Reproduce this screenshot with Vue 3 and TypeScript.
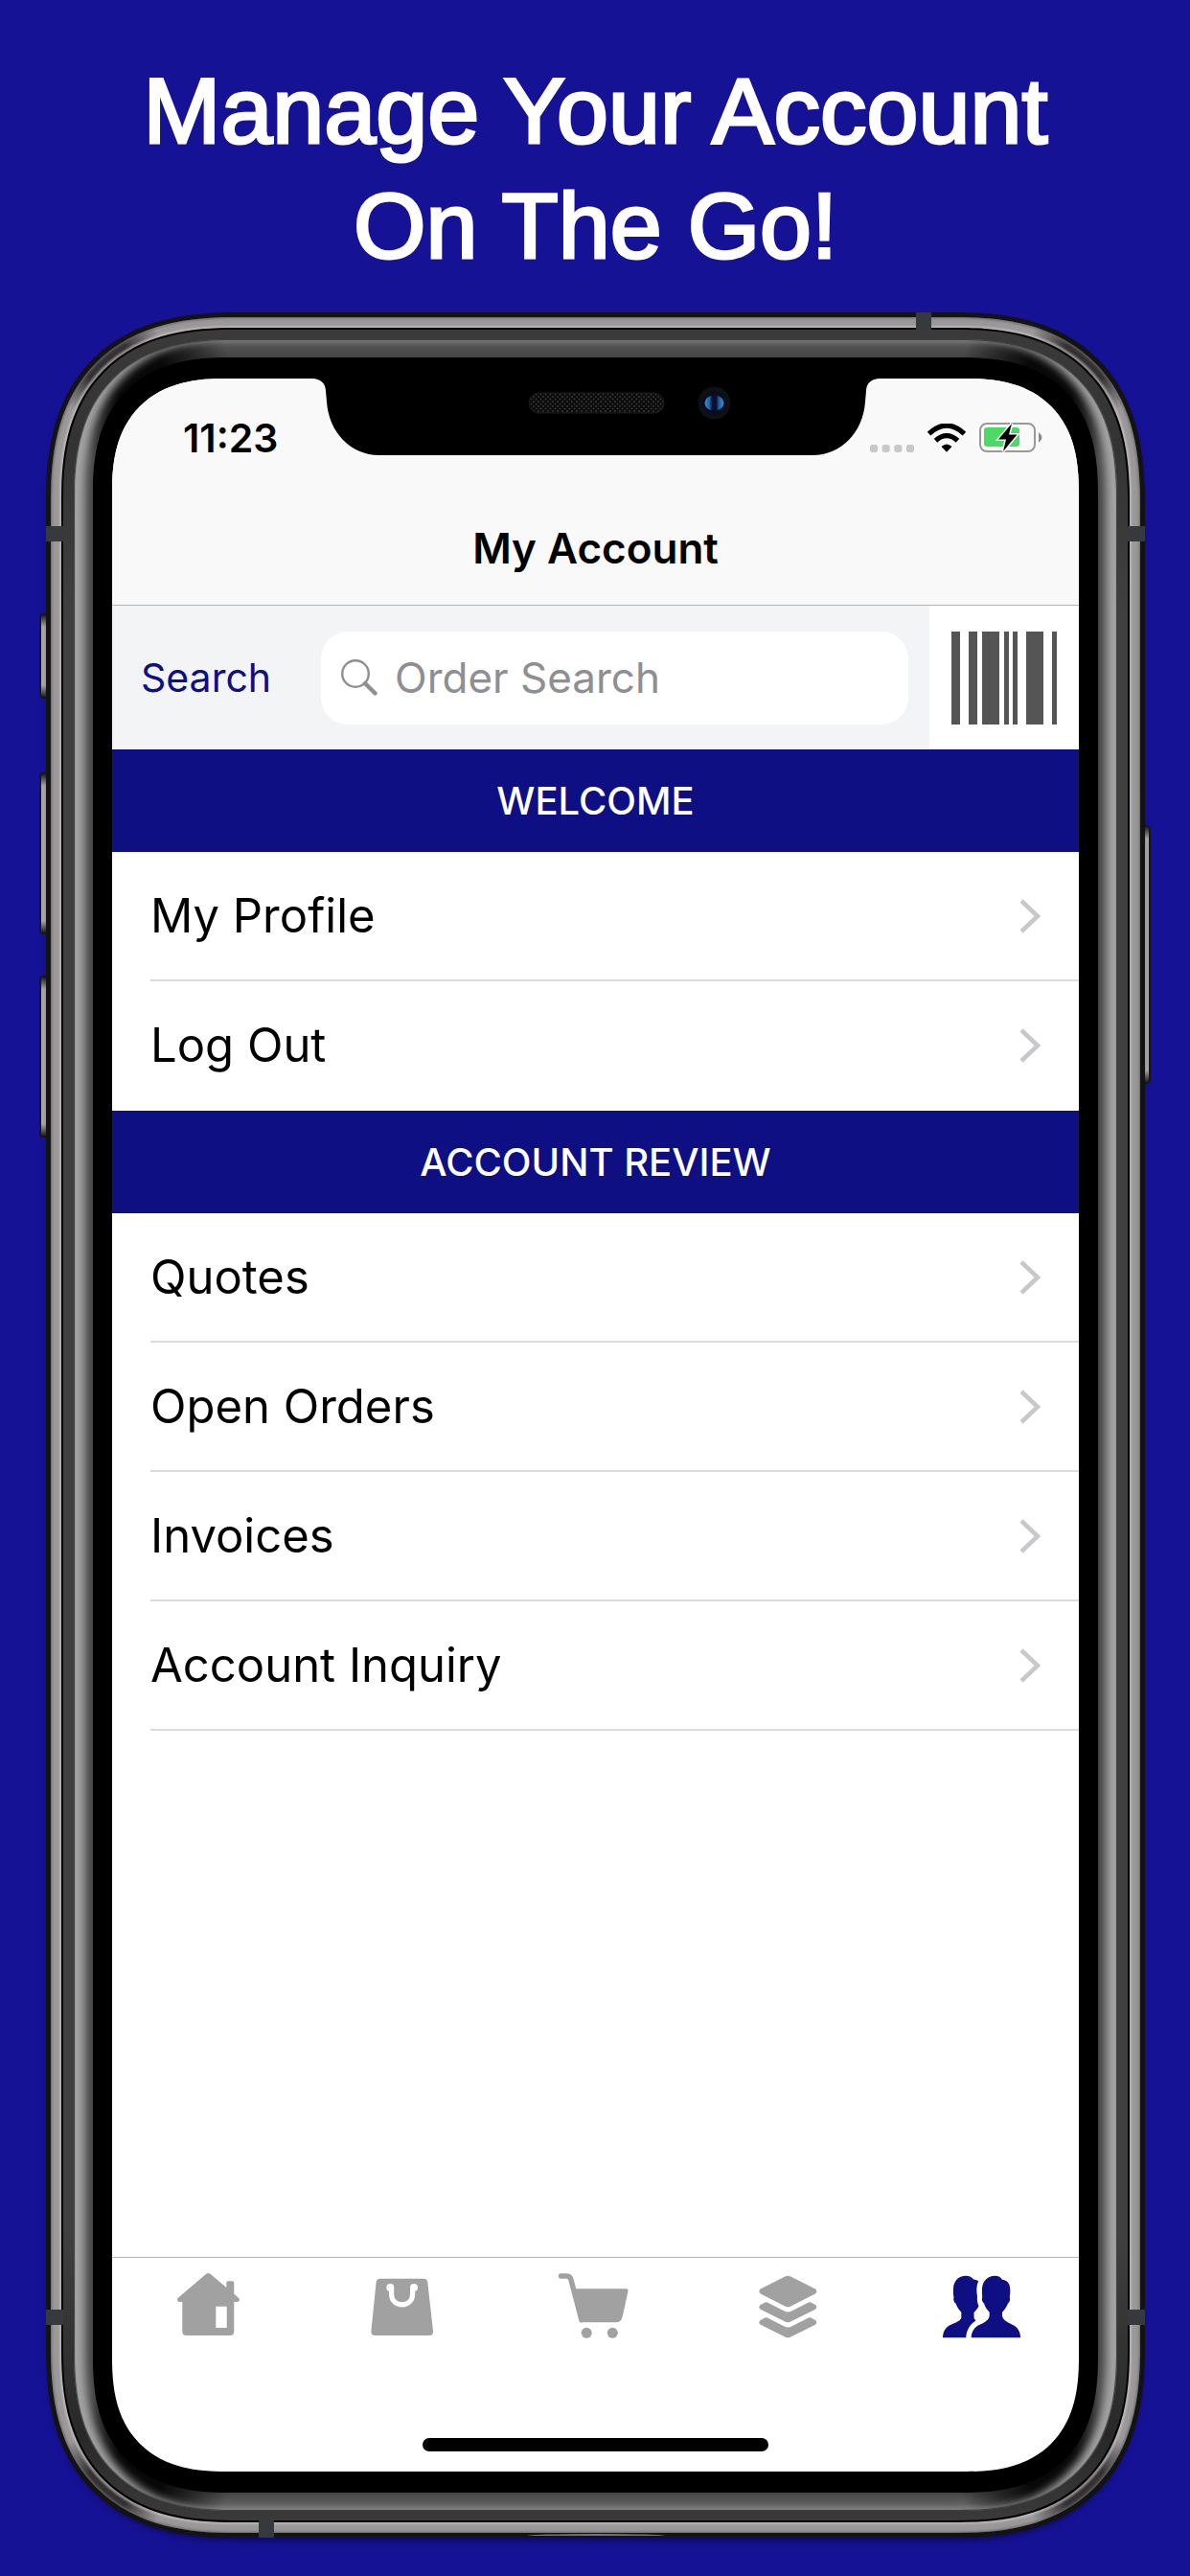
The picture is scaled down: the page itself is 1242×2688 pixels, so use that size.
<script setup lang="ts">
import { ref } from 'vue'

interface Section {
  title: string
  items: string[]
}

interface Bar {
  x: number
  width: number
}

interface Tab {
  id: 'home' | 'shop' | 'cart' | 'catalog' | 'account'
  label: string
}

const sections: Section[] = [
  { title: 'WELCOME', items: ['My Profile', 'Log Out'] },
  { title: 'ACCOUNT REVIEW', items: ['Quotes', 'Open Orders', 'Invoices', 'Account Inquiry'] },
]

const bars: Bar[] = [
  { x: 0, width: 9 },
  { x: 18, width: 9 },
  { x: 32, width: 18 },
  { x: 55, width: 5 },
  { x: 64, width: 5 },
  { x: 78, width: 18 },
  { x: 105, width: 5 },
]

const tabs: Tab[] = [
  { id: 'home', label: 'Home' },
  { id: 'shop', label: 'Shop' },
  { id: 'cart', label: 'Cart' },
  { id: 'catalog', label: 'Catalog' },
  { id: 'account', label: 'Account' },
]

const query = ref('')
const activeTab = ref<Tab['id']>('account')
</script>

<template>
  <main class="page">
    <h1 class="headline">Manage Your Account<br />On The Go!</h1>

    <div class="phone">
      <span class="key key-mute"></span>
      <span class="key key-up"></span>
      <span class="key key-down"></span>
      <span class="key key-power"></span>
      <div class="layer edge">
        <div class="layer rail">
          <div class="layer seam">
            <div class="layer band">
              <div class="layer glass">
                <div class="layer bezel">
                  <div class="layer screen">
                    <svg class="notch" viewBox="0 0 592 82" aria-hidden="true">
                      <defs>
                        <pattern id="mesh" width="5" height="5" patternUnits="userSpaceOnUse">
                          <rect width="5" height="5" fill="#0b0b0b" />
                          <circle cx="1" cy="1" r="1" fill="#363636" />
                          <circle cx="3.5" cy="3.5" r="1" fill="#363636" />
                        </pattern>
                        <linearGradient id="lens">
                          <stop offset="0" stop-color="#3b8fd6" />
                          <stop offset="0.25" stop-color="#235f9e" />
                          <stop offset="0.4" stop-color="#0a1030" />
                          <stop offset="0.6" stop-color="#0a1030" />
                          <stop offset="0.75" stop-color="#235f9e" />
                          <stop offset="1" stop-color="#3b8fd6" />
                        </linearGradient>
                      </defs>
                      <path d="M0 0V2C8 2 14 7 14 15L15 26C17 58 40 82 70 82H522C552 82 575 58 577 26L578 15C578 7 584 2 592 2V0Z" fill="#000" />
                      <rect x="226" y="17" width="141" height="21" rx="10.5" fill="url(#mesh)" stroke="#1c1c1c" />
                      <circle cx="419.500" cy="27.500" r="17" fill="#0e1013" />
                      <circle cx="419.500" cy="27.500" r="12" fill="#080c22" />
                      <ellipse cx="419.500" cy="27.500" rx="10" ry="8" fill="url(#lens)" />
                    </svg>

                    <header class="top">
                      <div class="status">
                        <span class="time">11:23</span>
                        <span class="indicators">
                          <svg width="46" height="8" viewBox="0 0 46 8" fill="#c8c8c8" aria-hidden="true">
                            <rect v-for="n in 4" :key="n" :x="(n - 1) * 12.67" y="0" width="8" height="8" rx="2.5" />
                          </svg>
                          <svg width="40" height="30" viewBox="0 0 40 30" fill="none" stroke="#000" aria-hidden="true">
                            <path d="M1.600 10.600Q20-6.500 38.400 10.600" stroke-width="5.200" />
                            <path d="M8.500 17.800Q20 7.500 31.500 17.800" stroke-width="5.200" />
                            <path d="M14.500 24Q20 19 25.500 24L20 29.800Z" fill="#000" stroke="none" />
                          </svg>
                          <svg width="66" height="31" viewBox="0 0 66 31" aria-hidden="true">
                            <rect x="1" y="1" width="57" height="29" rx="7" fill="none" stroke="#999" stroke-width="2" />
                            <rect x="5" y="5" width="37" height="20" rx="3" fill="#4cd964" />
                            <path d="M62 10Q69 15.500 62 21Z" fill="#8b8b8b" />
                            <path d="M34 1L20 17.500H28L25 30L39.500 12.500H31Z" fill="#000" stroke="#f9f9f9" stroke-width="3" paint-order="stroke" />
                          </svg>
                        </span>
                      </div>
                      <h2 class="title">My Account</h2>
                    </header>

                    <form class="search" role="search" @submit.prevent>
                      <button class="search-button" type="submit">Search</button>
                      <label class="field">
                        <svg width="38" height="38" viewBox="0 0 38 38" fill="none" stroke="#8e8e93" aria-hidden="true">
                          <circle cx="15" cy="15" r="13.800" stroke-width="2.400" />
                          <path d="M25 25L35.500 35.500" stroke-width="4.400" stroke-linecap="round" />
                        </svg>
                        <input v-model="query" type="text" placeholder="Order Search" aria-label="Order Search" />
                      </label>
                      <button class="scan" type="button" aria-label="Scan barcode">
                        <svg width="110" height="97" viewBox="0 0 110 97" fill="#555" aria-hidden="true">
                          <rect v-for="bar in bars" :key="bar.x" :x="bar.x" y="0" :width="bar.width" height="97" />
                        </svg>
                      </button>
                    </form>

                    <section v-for="section in sections" :key="section.title" class="section">
                      <h3 class="section-title">{{ section.title }}</h3>
                      <ul class="list">
                        <li v-for="item in section.items" :key="item">
                          <a class="row" href="#">
                            {{ item }}
                            <svg width="22" height="36" viewBox="0 0 22 36" fill="none" stroke="#c7c7cc" stroke-width="4.500" aria-hidden="true">
                              <path d="M2 2L19 18L2 34" />
                            </svg>
                          </a>
                        </li>
                      </ul>
                    </section>

                    <nav class="tabs" aria-label="Main">
                      <a
                        v-for="tab in tabs"
                        :key="tab.id"
                        class="tab"
                        :class="{ active: tab.id === activeTab }"
                        href="#"
                        :aria-label="tab.label"
                        @click.prevent="activeTab = tab.id"
                      >
                        <svg width="84" height="68" viewBox="0 0 84 68" fill="currentColor" aria-hidden="true">
                          <path
                            v-if="tab.id === 'home'"
                            fill-rule="evenodd"
                            d="M39.500 0.600Q41.300-0.600 43.200 0.600L60.300 15V10Q60.300 8.300 62 8.300H66.600Q68.300 8.300 68.300 10V21.800L73.200 26Q74.500 27.500 73.600 29Q72.800 30 71 30H68.300V60.500Q68.300 65 64 65H18.500Q14.300 65 14.300 60.500V30H12Q9.800 30 9.200 28.500Q8.700 27 10.200 25.600ZM49.300 34.700H60.700V57H49.300Z"
                          />
                          <template v-else-if="tab.id === 'shop'">
                            <path d="M19 5.700H64Q68 5.700 68.300 9.500L74 60.500Q74.200 65 70 65H13.400Q9.200 65 9.400 60.500L14.600 9.500Q15 5.700 19 5.700Z" />
                            <circle cx="29.300" cy="15" r="4" fill="#fff" />
                            <circle cx="54" cy="15" r="4" fill="#fff" />
                            <path d="M30.600 15V22C30.600 36.500 52.600 36.500 52.600 22V15" fill="none" stroke="#fff" stroke-width="5.200" />
                          </template>
                          <template v-else-if="tab.id === 'cart'">
                            <path d="M6.500 3H12.500Q16 3 17 7L28 49" fill="none" stroke="currentColor" stroke-width="5.400" stroke-linecap="round" />
                            <path d="M20 16.300H74.500Q77 16.300 76.500 19L70.500 46Q69 51.300 64 51.300H31Q26.500 51.300 25 47Z" />
                            <circle cx="33.200" cy="62.300" r="5.500" />
                            <circle cx="60.300" cy="62.300" r="5.500" />
                          </template>
                          <template v-else-if="tab.id === 'catalog'">
                            <path d="M38.800 3.300Q41.300 2.100 43.800 3.300L69.500 16.300Q73.200 19 69.500 21.700L43.800 34.700Q41.300 35.900 38.800 34.700L13.200 21.700Q9.400 19 13.200 16.300Z" />
                            <path id="sheet" d="M18 30.300Q18.800 30 19.800 30.500L37.500 39.500Q41.300 41.700 45.200 39.500L63 30.500Q64 30 64.900 30.300L69.500 32.700Q73.200 35.300 69.500 38L43.800 50.700Q41.300 51.900 38.800 50.700L13.200 38Q9.400 35.300 13.200 32.700Z" />
                            <use href="#sheet" y="16" />
                          </template>
                          <template v-else>
                            <path d="M25 2.700C29 2.700 31.500 4 33 6.500C35 6.500 37 7.300 38.300 8.500C36 12 36 20 37 24C36.500 29 37.500 32 38.500 34.500C37 37.500 35 39.500 33.500 41V46C33.500 47.300 34.500 48.300 35.500 49.500C29 54 25.500 60 25.300 67.300H1C1 61 4 56 10 53.500C14.500 51.500 20.300 49.500 20.300 46V40.700C17.500 38 15.500 34.500 14.500 31.500C12 30 12 27 12.500 24.500C11.500 22 12 19 12 15.500C12.500 8 17.500 2.700 25 2.700Z" />
                            <path d="M55.500 2.700C59 2.700 61.500 4 63 6.800C68 7.500 71.300 10.500 71.300 17C71.300 20 71.500 22 70.700 24.500C71.500 27 71.200 30 69 31.500C67.800 35 65.500 38.500 63 40.700V44C63 48.500 68 51 73 53.500C79 56 82 61 82 67.300H30.700C30.700 61 34 56 40 53.500C45 51.300 49.700 48.500 49.700 44V40.700C47 38 45 35 44 31.500C41.700 30 41.500 27 42.300 24.500C41.700 22 42 20 42 16C42.500 8 48 2.700 55.500 2.700Z" />
                          </template>
                        </svg>
                      </a>
                    </nav>
                    <span class="home-bar"></span>
                  </div>
                </div>
              </div>
            </div>
          </div>
        </div>
      </div>
      <span class="antenna side left high"></span>
      <span class="antenna side right high"></span>
      <span class="antenna side left low"></span>
      <span class="antenna side right low"></span>
      <span class="antenna cap above"></span>
      <span class="antenna cap below"></span>
      <span class="glint"></span>
    </div>
  </main>
</template>

<style>
body {
  margin: 0;
}
</style>

<style scoped>
.page {
  --soft: 1;
  --navy: #0d0f83;
  box-sizing: border-box;
  display: flex;
  flex-direction: column;
  min-height: 100vh;
  padding: 56px 47px 40px 48px;
  background: #161295;
  font-family: Inter, "Liberation Sans", sans-serif;
}

.headline {
  margin: 0 0 30px;
  color: #fff;
  font: 400 97px/120px "Liberation Sans", Arial, sans-serif;
  text-align: center;
  -webkit-text-stroke: 3px #fff;
}

.phone {
  position: relative;
  display: flex;
  flex: 1;
  flex-direction: column;
}

.layer {
  position: relative;
  box-sizing: border-box;
  display: flex;
  flex: 1;
  flex-direction: column;
}

.edge {
  padding: 5px;
  border-radius: calc(170px * var(--soft));
  background: #141314;
  box-shadow: 0 6px 8px -4px rgb(0 0 40 / 60%);
}

.rail {
  padding: 11px;
  border-radius: calc(165px * var(--soft));
  background:
    radial-gradient(circle 62px at 58px 46px, #353132 40%, transparent),
    radial-gradient(circle 62px at calc(100% - 58px) 46px, #353132 40%, transparent),
    radial-gradient(circle 62px at 58px calc(100% - 46px), #353132 40%, transparent),
    radial-gradient(circle 62px at calc(100% - 58px) calc(100% - 46px), #353132 40%, transparent),
    #9b9899;
  box-shadow: inset 0 0 3px 1px #6a6869;
}

.seam {
  padding: 2px;
  border-radius: calc(154px * var(--soft));
  background: #000;
  box-shadow: 0 0 2px 2px rgb(205 200 202 / 60%);
}

.band {
  padding: 10px 11px;
  border-radius: calc(152px * var(--soft));
  background: linear-gradient(#3a3a3a, #333 120px, #404040 300px, #404040 calc(100% - 300px), #282828 calc(100% - 90px), #3a3a3a);
}

.glass {
  padding: 19px 20px;
  border-radius: calc(141px * var(--soft));
  background:
    radial-gradient(circle 100px at 62px 34px, #080808 30%, transparent),
    radial-gradient(circle 100px at calc(100% - 62px) 34px, #080808 30%, transparent),
    radial-gradient(circle 100px at 62px calc(100% - 34px), #080808 30%, transparent),
    radial-gradient(circle 100px at calc(100% - 62px) calc(100% - 34px), #080808 30%, transparent),
    linear-gradient(#5c5c5c, #444 19px, #444 calc(100% - 19px), #707070);
  box-shadow:
    inset 0 0 1px 1px #3a3a3a,
    inset 14px 0 10px -2px #a4a4a4,
    inset -14px 0 10px -2px #a4a4a4;
}

.bezel {
  padding: 22px 20px;
  border-radius: calc(121px * var(--soft));
  background: #000;
}

.screen {
  overflow: hidden;
  border-radius: calc(101px * var(--soft));
  background: #fff;
}

@supports (corner-shape: superellipse(1.3)) {
  .page {
    --soft: 1.17;
  }

  .layer {
    corner-shape: superellipse(1.3);
  }
}

.notch {
  position: absolute;
  top: -2px;
  left: 50%;
  width: 592px;
  height: 82px;
  transform: translateX(-50%);
}

.key {
  position: absolute;
  box-sizing: border-box;
  width: 12px;
  border: 2px solid #19171a;
  border-radius: 4px;
  background: linear-gradient(#222, #aaa 12px, #aaa calc(100% - 12px), #222);
}

.key-mute,
.key-up,
.key-down {
  left: -7px;
}

.key-mute {
  top: 314px;
  height: 89px;
}

.key-up {
  top: 480px;
  height: 169px;
}

.key-down {
  top: 692px;
  height: 169px;
}

.key-power {
  top: 535px;
  right: -6px;
  height: 270px;
}

.antenna {
  position: absolute;
  background: #363a3f;
}

.side {
  width: 18px;
  height: 16px;
}

.left {
  left: 0;
}

.right {
  right: 0;
}

.high {
  top: 223px;
}

.low {
  bottom: 222px;
}

.cap {
  width: 16px;
  height: 18px;
}

.above {
  top: 0;
  right: 223px;
}

.below {
  bottom: 0;
  left: 222px;
}

.glint {
  position: absolute;
  bottom: 0;
  left: 50%;
  box-sizing: border-box;
  width: 144px;
  height: 4px;
  border-top: 2px solid #77767c;
  border-radius: 50% 50% 0 0;
  transform: translateX(-50%);
}

.top {
  border-bottom: 1px solid #b2b2b4;
  background: #f9f9f9;
}

.status {
  display: flex;
  align-items: center;
  justify-content: space-between;
  height: 123px;
  padding: 0 38px 0 74px;
}

.time {
  font-size: 41px;
  font-weight: 600;
  line-height: 48px;
}

.indicators {
  display: flex;
  align-items: flex-end;
  gap: 14px;
}

.title {
  margin: 0;
  padding-bottom: 5px;
  font-size: 44px;
  font-weight: 600;
  line-height: 108px;
  text-align: center;
}

.search {
  display: flex;
  align-items: center;
  background: #f3f4f5;
}

.search-button {
  width: 218px;
  padding: 0 0 0 30px;
  border: 0;
  background: none;
  color: var(--navy);
  font: 400 41px/52px Inter, sans-serif;
  text-align: left;
}

.field {
  box-sizing: border-box;
  display: flex;
  flex: 1;
  align-items: center;
  gap: 18px;
  min-width: 0;
  height: 97px;
  margin-right: 22px;
  padding: 0 21px;
  border-radius: 28px;
  background: #fff;
}

.field svg {
  flex: none;
}

.field input {
  flex: 1;
  min-width: 0;
  padding: 0;
  border: 0;
  outline: 0;
  background: none;
  color: #000;
  font: 400 44px/54px Inter, sans-serif;
}

.field input::placeholder {
  color: #8e8e93;
  opacity: 1;
}

.scan {
  display: grid;
  width: 156px;
  height: 150px;
  padding: 0;
  border: 0;
  background: #fff;
  place-items: center;
}

.section-title {
  margin: 0;
  background: var(--navy);
  color: #fff;
  font-size: 40px;
  font-weight: 500;
  line-height: 107px;
  text-align: center;
}

.list {
  margin: 0;
  padding: 0 0 0 40px;
  list-style: none;
}

.row {
  box-sizing: border-box;
  display: flex;
  align-items: center;
  justify-content: space-between;
  height: 135px;
  padding-right: 40px;
  border-bottom: 2px solid #dcdcde;
  color: #000;
  font-size: 49px;
  text-decoration: none;
}

.section:first-of-type li:last-child .row {
  border-bottom-color: transparent;
}

.tabs {
  display: flex;
  margin-top: auto;
  border-top: 1px solid #b4b4b4;
}

.tab {
  flex: 1;
  padding: 16px 0 104px;
  color: #a1a1a1;
  line-height: 0;
  text-align: center;
}

.tab.active {
  color: var(--navy);
}

.home-bar {
  align-self: center;
  width: 361px;
  height: 14px;
  margin-bottom: 21px;
  border-radius: 7px;
  background: #000;
}
</style>
